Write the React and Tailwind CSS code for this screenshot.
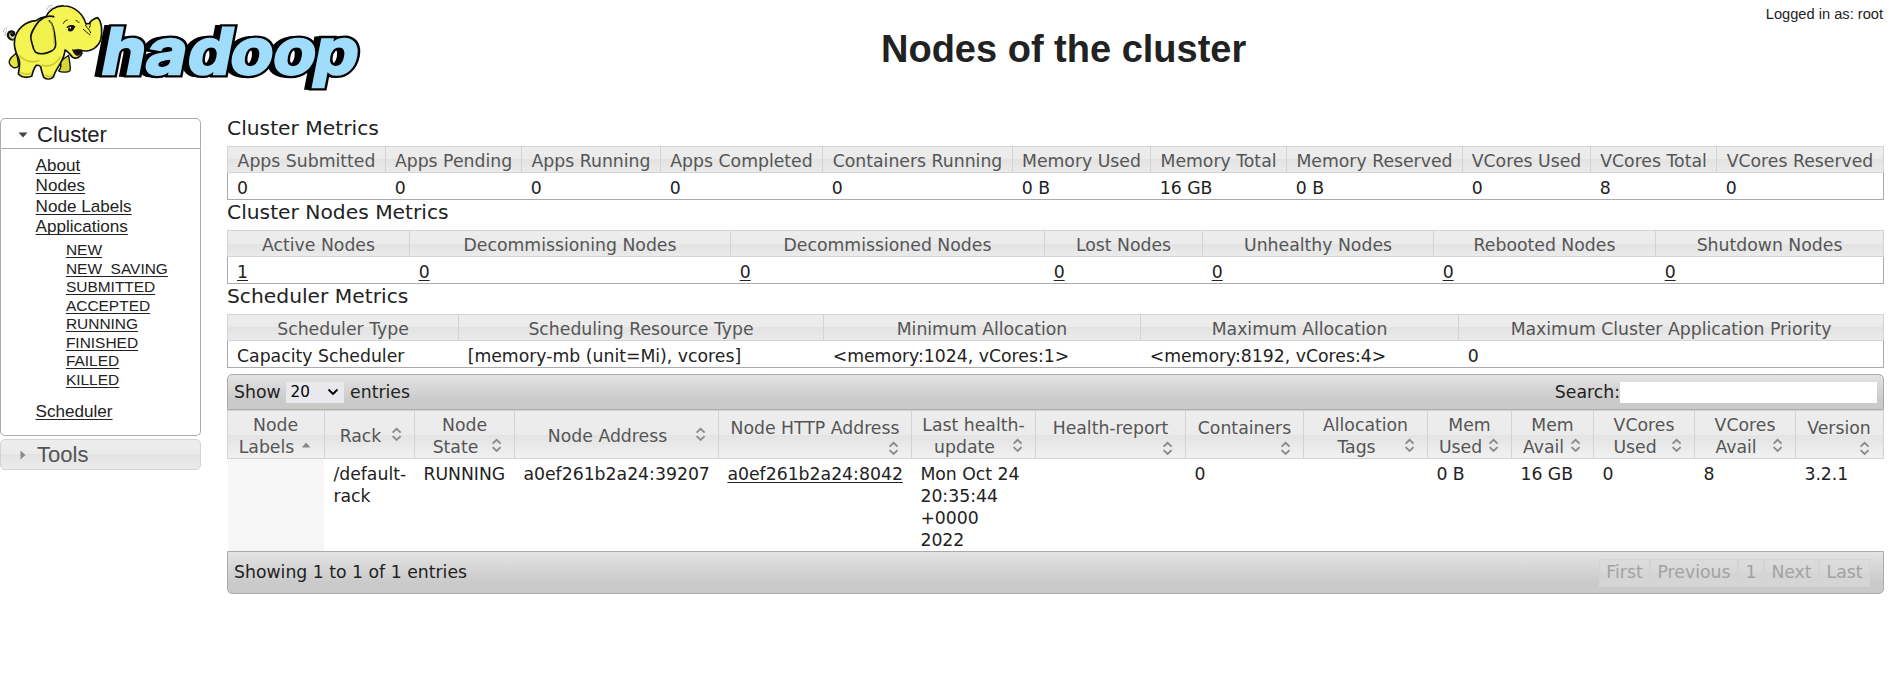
import React from "react";

const SANS = "font-['DejaVu_Sans',sans-serif]";
const GLASS =
  "bg-[linear-gradient(to_bottom,#ededed_0%,#ebebeb_50%,#e3e3e3_50%,#f1f1f1_calc(50%_+_24px))]";
const BAR = "bg-[linear-gradient(to_bottom,#e3e3e3_0%,#cacaca_75%,#cacaca_100%)]";

function Logo() {
  const letters = [
    ["h", 90],
    ["a", 130],
    ["d", 168],
    ["o", 206.5],
    ["o", 245.5],
    ["p", 283],
  ];
  const word = (dx, props) =>
    letters.map(([c, x], i) => (
      <text key={i} x={x + dx} y="0" {...props}>
        {c}
      </text>
    ));
  return (
    <svg width="370" height="100" viewBox="0 0 370 100" className="block shrink-0">
      <g
        transform="translate(0 73.5) skewX(-11) scale(1.1 1)"
        fontFamily="Inter, sans-serif"
        fontWeight="700"
        fontSize="63.5"
        strokeLinejoin="miter"
        strokeMiterlimit="2"
      >
        {word(-5, { fill: "#000", stroke: "#000", strokeWidth: 5.5 })}
        {word(-3, { fill: "#000", stroke: "#000", strokeWidth: 5.5 })}
        {word(0, { fill: "#000", stroke: "#000", strokeWidth: 7 })}
        {word(0, { fill: "#a0dcfb", stroke: "#a0dcfb", strokeWidth: 2.4 })}
      </g>
      <g transform="scale(0.3333)" stroke="#111" strokeLinejoin="round" strokeLinecap="round">
        <path d="M45 116C32 122 22 112 25 101C28 93 40 92 42 100C43 106 36 108 34 103" fill="none" strokeWidth="8" />
        <path d="M44 116C33 119 26 110 29 102" fill="none" stroke="#d9d93a" strokeWidth="3" />
        <path d="M50 158C38 170 25 176 28 190C33 203 47 208 56 198Z" fill="#e6e63c" strokeWidth="4" />
        <path d="M178 186C186 194 182 205 176 213C184 218 204 218 210 212C213 200 207 178 206 166Z" fill="#d6d63a" strokeWidth="4" />
        <path
          d="M108 62C76 64 50 88 44 118C40 140 48 160 56 176C62 188 59 202 55 222C64 231 80 234 95 229C98 216 102 204 109 196C116 195 119 196 122 200C124 212 128 224 131 232C142 240 154 238 161 230C164 216 172 206 181 190C188 178 194 165 195 150C204 154 210 163 218 172C228 178 242 172 246 160C246 155 243 152 240 150C262 158 290 150 302 120C308 96 306 66 293 53C280 56 270 64 269 70C264 70 260 72 258 72C250 44 226 18 192 18C166 16 146 32 138 50C126 52 116 56 108 62Z"
          fill="#f4f452"
          strokeWidth="5"
        />
        <path d="M218 150C222 166 236 174 244 160C245 152 240 149 234 148C228 150 222 150 218 150Z" fill="#111" strokeWidth="2" />
        <path d="M227 165C231 168 236 168 240 164" fill="none" stroke="#a33" strokeWidth="3" />
        <path d="M161 50C140 44 118 58 106 78C96 94 88 108 94 122C98 134 98 146 106 156C120 166 140 160 156 152C168 146 168 136 166 120C164 98 158 70 148 62" fill="#f1f14e" strokeWidth="5" />
        <path d="M150 62C160 80 162 105 162 130" fill="none" stroke="#b9b936" strokeWidth="3" />
        <path d="M60 168C75 186 100 188 116 182M128 196C150 204 170 190 180 172M64 218C74 224 84 224 92 220M136 226C144 231 152 230 157 225" fill="none" stroke="#c9c936" strokeWidth="5" />
        <path d="M257 76C260 86 270 88 272 98M270 70C272 76 270 80 268 84M250 88C258 94 262 100 270 104" fill="none" strokeWidth="3" />
        <path d="M190 70C193 64 198 60 202 60M228 62C232 62 235 64 237 68" fill="none" strokeWidth="3" />
        <path d="M206 86C206 76 218 74 223 80C222 90 214 96 206 92Z" fill="#111" strokeWidth="3" />
        <path d="M202 82C208 76 216 76 224 80" fill="none" strokeWidth="4" />
        <circle cx="211" cy="83" r="2.5" fill="#fff" stroke="none" />
        <path d="M10 96C10 90 14 84 20 84M15 106C14 100 16 95 20 92M140 28C144 20 150 16 156 16M146 32C148 28 151 25 155 23" fill="none" stroke="#888" strokeWidth="2" />
      </g>
    </svg>
  );
}

function Link({ children }) {
  return (
    <a className="underline decoration-1 underline-offset-[1.5px] [text-decoration-skip-ink:none]">{children}</a>
  );
}

function Sidebar() {
  const states = ["NEW", "NEW_SAVING", "SUBMITTED", "ACCEPTED", "RUNNING", "FINISHED", "FAILED", "KILLED"];
  return (
    <aside className="w-[201px] shrink-0 pt-[18px] text-[#222]">
      <div className="flex h-[31px] items-center rounded-t-[5px] border border-[#aaa] bg-white pt-[2px]">
        <svg width="10" height="6" className="ml-[17px]" viewBox="0 0 10 6">
          <path d="M0.5 0.5H9.5L5 5.5Z" fill="#454545" />
        </svg>
        <span className="ml-[9px] text-[22.1px] leading-[26px]">Cluster</span>
      </div>
      <div className="h-[287px] rounded-b-[5px] border border-t-0 border-[#aaa] pl-[34.6px] pt-[6.8px] text-[17.1px] leading-[20.4px]">
        <ul>
          {["About", "Nodes", "Node Labels", "Applications"].map((t) => (
            <li key={t}>
              <Link>{t}</Link>
            </li>
          ))}
        </ul>
        <ul className="mb-[12.6px] mt-[4px] pl-[30.3px] text-[15.48px] leading-[18.5px]">
          {states.map((t) => (
            <li key={t}>
              <Link>{t}</Link>
            </li>
          ))}
        </ul>
        <Link>Scheduler</Link>
      </div>
      <div className={"mt-[3px] flex h-[31px] items-center rounded-[5px] border border-[#d3d3d3] text-[#555] " + GLASS}>
        <svg width="6" height="10" className="ml-[19px]" viewBox="0 0 6 10">
          <path d="M0.5 0.5V9.5L5.5 5Z" fill="#888" />
        </svg>
        <span className="ml-[11px] text-[22.1px] leading-[26px]">Tools</span>
      </div>
    </aside>
  );
}

function Metrics({ title, cols, head, data, linked }) {
  return (
    <section>
      <h2 className="h-[30px] text-[20.25px] leading-[24px]">{title}</h2>
      <div className={"grid h-[27px] border border-[#d3d3d3] text-[#555] " + GLASS + " " + cols}>
        {head.map((h, i) => (
          <div
            key={h}
            className={"whitespace-nowrap pt-[3px] text-center leading-[22px] " + (i ? "border-l border-[#d3d3d3]" : "")}
          >
            {h}
          </div>
        ))}
      </div>
      <div className={"grid h-[27px] border border-t-0 border-[#aaa] pt-[4px] leading-[22px] " + cols}>
        {data.map((d, i) => (
          <div key={i} className={"whitespace-nowrap " + (i ? "pl-[9.7px]" : "pl-[9px]")}>
            {linked ? <Link>{d}</Link> : d}
          </div>
        ))}
      </div>
    </section>
  );
}

function SortBoth() {
  return (
    <svg width="16" height="16" viewBox="0 0 16 16" className="block shrink-0">
      <path d="M3.6 7.6L7.6 3.8L11.6 7.6M3.6 11.2L7.6 15L11.6 11.2" fill="none" stroke="#888" strokeWidth="1.8" />
    </svg>
  );
}

function SortUp() {
  return (
    <svg width="16" height="16" viewBox="0 0 16 16" className="block shrink-0">
      <path d="M2.8 11.5H11.4L7.1 6.5Z" fill="#888" />
    </svg>
  );
}

const NODE_COLS =
  "grid-cols-[96px_90px_100px_204px_193px_124px_150px_118px_124px_84px_82px_101px_101px_87px]";

const nodeHeads = [
  { top: "Node", last: "Labels", up: true },
  { last: "Rack" },
  { top: "Node", last: "State" },
  { last: "Node Address" },
  { top: "Node HTTP Address" },
  { top: "Last health-", last: "update" },
  { top: "Health-report" },
  { top: "Containers" },
  { top: "Allocation", last: "Tags" },
  { top: "Mem", last: "Used" },
  { top: "Mem", last: "Avail" },
  { top: "VCores", last: "Used" },
  { top: "VCores", last: "Avail" },
  { top: "Version" },
];

const nodeRow = [
  "",
  "/default-\nrack",
  "RUNNING",
  "a0ef261b2a24:39207",
  "a0ef261b2a24:8042",
  "Mon Oct 24\n20:35:44\n+0000\n2022",
  "",
  "0",
  "",
  "0 B",
  "16 GB",
  "0",
  "8",
  "3.2.1",
];

function NodesTable() {
  return (
    <section className="mt-[6px]">
      <div
        className={
          "flex h-[36px] items-center rounded-t-[5px] border border-[#aaa] pl-[6px] pr-[6px] leading-[22px] " + BAR
        }
      >
        <span>Show</span>
        <div className="ml-[5px] mr-[6.5px] flex h-[21px] w-[58px] items-center justify-between bg-[#e9e9ed] pl-[5px] pr-[5px] text-[15.2px] text-black">
          <span>20</span>
          <svg width="12" height="8" viewBox="0 0 12 8">
            <path d="M1.5 1.5L6 6L10.5 1.5" fill="none" stroke="#000" strokeWidth="1.9" />
          </svg>
        </div>
        <span>entries</span>
        <span className="ml-auto">Search:</span>
        <input className="h-[21px] w-[257px] bg-white outline-none" />
      </div>
      <div className={"grid h-[49px] border border-[#d3d3d3] text-[#555] " + GLASS + " " + NODE_COLS}>
        {nodeHeads.map((h, i) => (
          <div
            key={i}
            className={
              "flex flex-col justify-center whitespace-nowrap pr-[9px] pt-[3px] leading-[22px] " +
              (i ? "border-l border-[#d3d3d3] pl-[8px]" : "pl-[7px]")
            }
          >
            {h.top && <div className="flex justify-center pl-px">{h.top}</div>}
            {h.last ? (
              <div className="flex items-start">
                <span className="flex flex-1 justify-center pr-px">{h.last}</span>
                {h.up ? <SortUp /> : <SortBoth />}
              </div>
            ) : (
              <div className="flex justify-end">
                <SortBoth />
              </div>
            )}
          </div>
        ))}
      </div>
      <div className={"grid h-[92px] border-l border-r border-transparent leading-[22px] " + NODE_COLS}>
        {nodeRow.map((d, i) => (
          <div key={i} className={"whitespace-pre pt-[4px] " + (i ? "pl-[9.4px]" : "bg-[#f6f6f6]")}>
            {i === 4 ? <Link>{d}</Link> : d}
          </div>
        ))}
      </div>
      <div
        className={
          "flex h-[43px] items-center justify-between rounded-b-[5px] border border-[#aaa] pl-[6px] pr-[13px] leading-[22px] " +
          BAR
        }
      >
        <span className="pb-[2px]">Showing 1 to 1 of 1 entries</span>
        <div className="grid h-[28px] grid-cols-[51px_88px_26px_55px_51px] text-[#a2a2a2]">
          {["First", "Previous", "1", "Next", "Last"].map((t) => (
            <span
              key={t}
              className="flex items-center justify-center border border-[#d4d4d4] bg-[linear-gradient(to_bottom,#dcdcdc_0%,#d8d8d8_50%,#d4d4d4_50%,#d6d6d6_100%)] pb-[2px]"
            >
              {t}
            </span>
          ))}
        </div>
      </div>
    </section>
  );
}

export default function App() {
  return (
    <div className="h-[676px] w-[1900px] overflow-hidden bg-white font-['Liberation_Sans',sans-serif] text-[#222]">
      <header className="flex h-[100px]">
        <Logo />
        <h1 className="ml-[511px] mt-[26px] whitespace-nowrap text-[38px] font-bold leading-[46px]">
          Nodes of the cluster
        </h1>
        <div className="ml-auto mr-[17px] mt-[5px] text-[14.65px] leading-[18px]">Logged in as: root</div>
      </header>
      <div className="flex">
        <Sidebar />
        <main className={"ml-[26px] w-[1657px] shrink-0 pt-[16px] text-[17.28px] " + SANS}>
          <Metrics
            title="Cluster Metrics"
            cols="grid-cols-[157px_136px_139px_162px_190px_138px_136px_176px_128px_126px_167px]"
            head={[
              "Apps Submitted",
              "Apps Pending",
              "Apps Running",
              "Apps Completed",
              "Containers Running",
              "Memory Used",
              "Memory Total",
              "Memory Reserved",
              "VCores Used",
              "VCores Total",
              "VCores Reserved",
            ]}
            data={["0", "0", "0", "0", "0", "0 B", "16 GB", "0 B", "0", "8", "0"]}
          />
          <Metrics
            title="Cluster Nodes Metrics"
            cols="grid-cols-[181px_321px_314px_158px_231px_222px_228px]"
            head={[
              "Active Nodes",
              "Decommissioning Nodes",
              "Decommissioned Nodes",
              "Lost Nodes",
              "Unhealthy Nodes",
              "Rebooted Nodes",
              "Shutdown Nodes",
            ]}
            data={["1", "0", "0", "0", "0", "0", "0"]}
            linked
          />
          <Metrics
            title="Scheduler Metrics"
            cols="grid-cols-[230px_365px_317px_318px_425px]"
            head={[
              "Scheduler Type",
              "Scheduling Resource Type",
              "Minimum Allocation",
              "Maximum Allocation",
              "Maximum Cluster Application Priority",
            ]}
            data={["Capacity Scheduler", "[memory-mb (unit=Mi), vcores]", "<memory:1024, vCores:1>", "<memory:8192, vCores:4>", "0"]}
          />
          <NodesTable />
        </main>
      </div>
    </div>
  );
}
